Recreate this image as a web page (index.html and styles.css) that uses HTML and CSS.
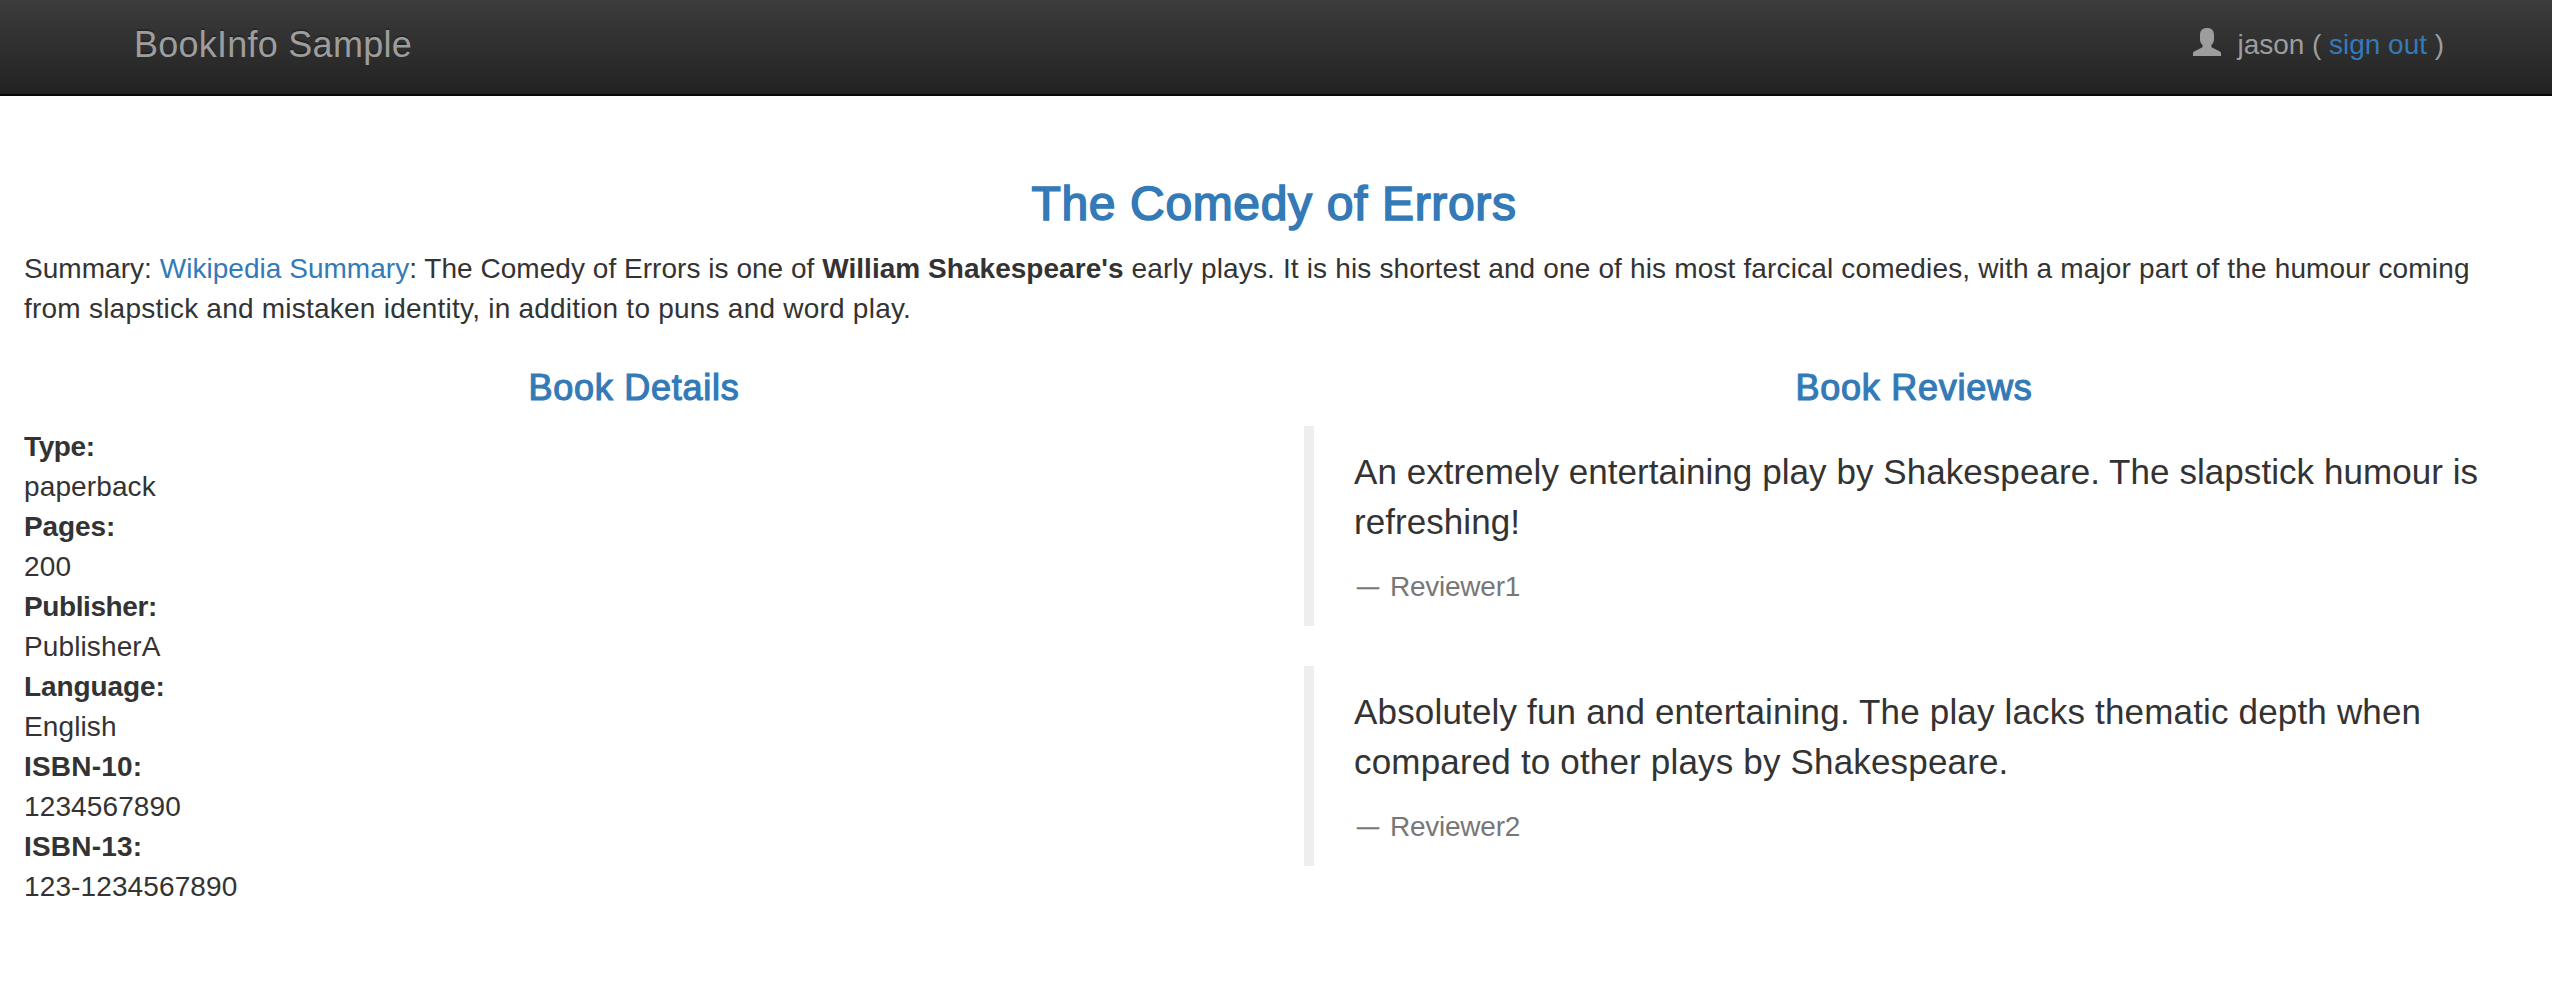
FILE: index.html
```html
<!DOCTYPE html>
<html lang="en">
<head>
<meta charset="utf-8">
<title>Simple Bookstore App</title>
<link rel="stylesheet" href="styles.css">
</head>
<body>
<nav class="navbar">
  <a class="brand">BookInfo Sample</a>
  <div class="user">
    <svg class="user-icon" viewBox="0 0 28 28" aria-hidden="true"><path d="M14 0C18.400 0 21 2.600 21 7V11.500C21 14 19.800 15.800 18.400 17V18.200C18.400 19.200 18.800 19.500 20 20.100L26 23.100C27.300 23.800 28 24.400 28 25.600V28H0V25.600C0 24.400.7 23.800 2 23.100L8 20.100C9.200 19.500 9.600 19.200 9.600 18.200V17C8.200 15.800 7 14 7 11.500V7C7 2.600 9.600 0 14 0Z"/></svg>
    <span class="user-text">jason ( <a class="link">sign out</a> )</span>
  </div>
</nav>
<main class="content">
  <h3 class="title">The Comedy of Errors</h3>
  <p class="summary"><span class="lead">Summary: <a class="link">Wikipedia Summary</a>: The Comedy of Errors is one of <b>William Shakespeare's</b></span> early plays. It is his shortest and one of his most farcical comedies, with a major part of the humour coming<br><span class="loose">from slapstick and mistaken identity, in addition to puns and word play.</span></p>
  <div class="columns">
    <section>
      <h4 class="heading">Book Details</h4>
      <dl class="details">
        <dt class="tight">Type:</dt><dd>paperback</dd>
        <dt>Pages:</dt><dd>200</dd>
        <dt class="tight">Publisher:</dt><dd>PublisherA</dd>
        <dt>Language:</dt><dd>English</dd>
        <dt class="wide">ISBN-10:</dt><dd>1234567890</dd>
        <dt class="wide">ISBN-13:</dt><dd>123-1234567890</dd>
      </dl>
    </section>
    <section>
      <h4 class="heading">Book Reviews</h4>
      <blockquote class="review">
        <p class="quote">An extremely entertaining play by Shakespeare. The slapstick humour is<br>refreshing!</p>
        <small class="reviewer"><span class="dash">—</span>Reviewer1</small>
      </blockquote>
      <blockquote class="review review-loose">
        <p class="quote">Absolutely fun and entertaining. The play lacks thematic depth when<br>compared to other plays by Shakespeare.</p>
        <small class="reviewer"><span class="dash">—</span>Reviewer2</small>
      </blockquote>
    </section>
  </div>
</main>
</body>
</html>
```
FILE: styles.css
```css
* { box-sizing: border-box; }
body {
  margin: 0;
  background: #fff;
  color: #333;
  font: 28px/40px "Helvetica Neue", Helvetica, "Liberation Sans", Arial, sans-serif;
}
.link { color: #337ab7; text-decoration: none; }
.navbar {
  display: flex;
  justify-content: space-between;
  height: 96px;
  padding: 24px 108px 0 134px;
  background: linear-gradient(#3c3c3c, #222);
  border-bottom: 2px solid #080808;
  color: #9d9d9d;
}
.brand { padding-top: 1px; font-size: 36px; letter-spacing: .25px; text-shadow: 0 -2px 0 rgba(0, 0, 0, .25); }
.user { display: flex; }
.user-icon { width: 28px; height: 28px; margin: 4px 17px 0 0; fill: #9d9d9d; }
.user-text { padding-top: 1px; letter-spacing: -.03px; }
.content { padding: 76px 28px 0 24px; }
.title, .heading {
  margin: 0;
  color: #337ab7;
  font-weight: 400;
  text-align: center;
  -webkit-text-stroke: 1.2px #337ab7;
}
.title { height: 77px; font-size: 48px; line-height: 64px; letter-spacing: .65px; -webkit-text-stroke-width: 1.6px; }
.summary { margin: 0; height: 119px; letter-spacing: .155px; white-space: nowrap; }
.lead { letter-spacing: .035px; }
.loose { letter-spacing: .23px; }
.columns { display: grid; grid-template-columns: 1fr 1fr; gap: 60px; }
.heading { height: 58px; font-size: 36px; line-height: 40px; letter-spacing: .75px; }
.details { margin: 0; padding-top: 1px; }
dt { font-weight: 700; letter-spacing: -.1px; }
.tight { letter-spacing: -.4px; }
.wide { letter-spacing: .2px; }
dd { margin: 0; letter-spacing: .12px; }
.review {
  height: 200px;
  margin: 0 0 40px;
  padding: 21px 0 19px 40px;
  border-left: 10px solid #eee;
  white-space: nowrap;
}
.quote { margin: 0 0 20px; font-size: 35px; line-height: 50px; letter-spacing: .06px; }
.review-loose .quote { letter-spacing: .17px; }
.reviewer { display: block; font-size: 28px; letter-spacing: -.25px; color: #777; }
.dash { display: inline-block; width: 33px; margin-left: 3px; font-size: 22px; line-height: 1; vertical-align: 2px; -webkit-text-stroke: .5px #777; }
```
